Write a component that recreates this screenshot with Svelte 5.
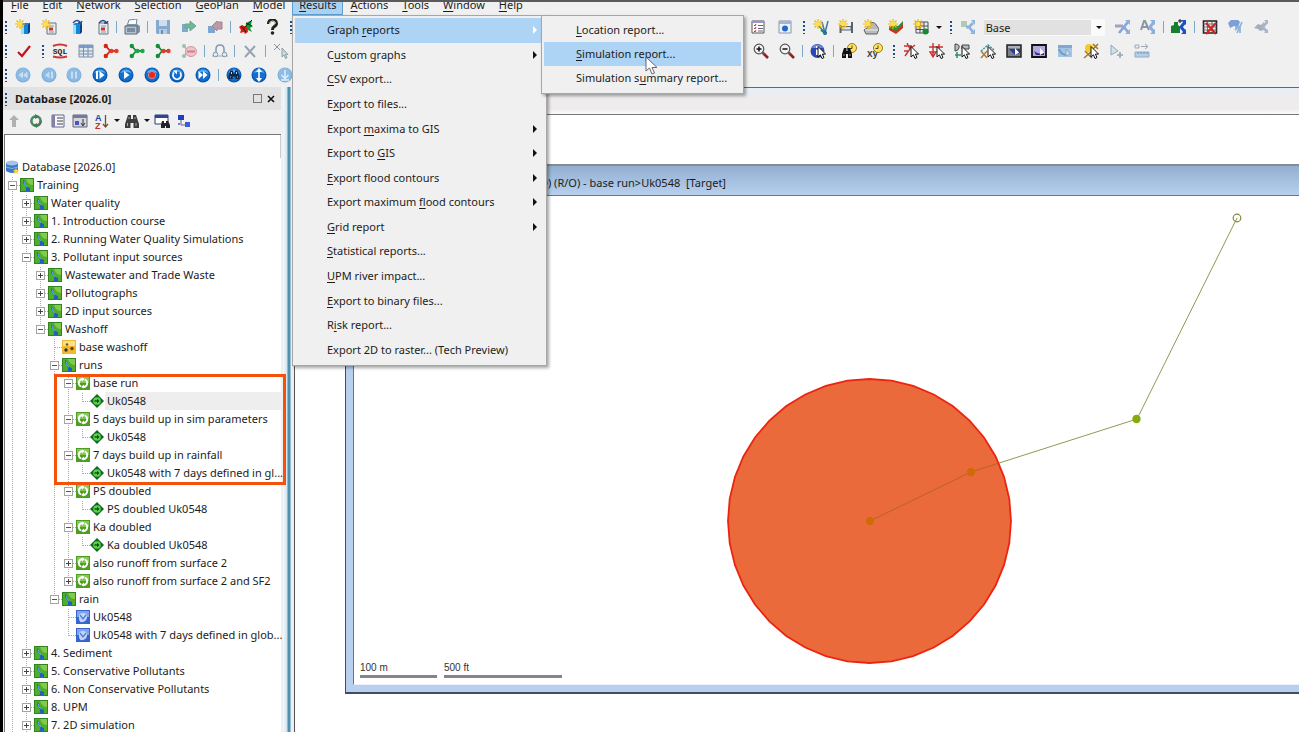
<script>
  const star = '<path d="M5 0v10M0 5h10M1.5 1.5l7 7M8.500 1.500l-7 7" stroke="#f2b705" stroke-width="1.2"/><circle cx="5" cy="5" r="2.300" fill="#ffe04a"/>';
  const pointer = '<path d="M8 3.500v10.500l2.400-2.200 1.600 3.700 2-.9-1.600-3.500h3.200z" fill="#fff" stroke="#111"/>';
  const cube = '<path d="M6 6l2-2h7v9l-2 2H6z" fill="#1786d8"/><path d="M6 6h3v9H6z" fill="#8fe3fb"/><path d="M13 6l2-2v9l-2 2z" fill="#063f8c"/>';
  const page = '<path d="M6 4h9v11H6z" fill="#e9edf0" stroke="#66757e"/><path d="M8 7h5M8 13h5" stroke="#8a979e"/><path d="M8 8.500h4v3H8z" fill="#c33"/>';
  const ball = '<circle cx="8" cy="8" r="7.500" fill="#0a55ad"/><circle cx="8" cy="7.500" r="6.500" fill="#126fce"/><path d="M2.500 6a6 6 0 0 1 11 0q-5.500-2-11 0z" fill="#5ba8ec"/>';
  const paleBall = '<circle cx="8" cy="8" r="7.500" fill="#7fb1de"/><circle cx="8" cy="7.500" r="6.500" fill="#8dbbe4"/>';
  const net = (a, b) => `<path d="M3 3l4 5-4 5M7 8h7" stroke="${a}" stroke-width="1.800" fill="none"/><circle cx="2.800" cy="3" r="2.200" fill="${a}"/><circle cx="2.800" cy="13" r="2.200" fill="${a}"/><circle cx="8.500" cy="8" r="2.200" fill="${b}"/><circle cx="13.500" cy="8" r="2.200" fill="${b}"/>`;
  const binoc = (c) => `<path d="M4 2h3v4h2V2h3l3 9v4H9.500v-5h-3v5H1v-4z" fill="${c}"/><path d="M3.500 10v3M12 10v3M5 4v2M11 4v2" stroke="#aaa"/>`;
  const clock = '<circle cx="11" cy="5" r="4.500" fill="#ffe45c" stroke="#9b7d12"/><path d="M11 2.500V5.500h-2.500" stroke="#444" fill="none"/>';
  const lens = (mark) => `<path d="M10 10l5 5" stroke="#9b1c1c" stroke-width="2.600"/><path d="M9.500 9.500l2 2" stroke="#555" stroke-width="2"/><circle cx="6" cy="6" r="4.800" fill="#f3f3f3" stroke="#555" stroke-width="1.200"/><path d="${mark}" stroke="#111" stroke-width="1.500"/>`;

  const icons = {
    newDb: `${cube}${star}`,
    newPage: `${page}${star}`,
    openDb: `${cube}<path d="M6 4q4-5 8 0l1-2M14 4h-3" stroke="#234a84" stroke-width="1.300" fill="none"/>`,
    openPage: `${page}<path d="M6 4q4-5 8 0l1-2M14 4h-3" stroke="#234a84" stroke-width="1.300" fill="none"/>`,
    print: '<path d="M5 1l8-1-1 7H3z" fill="#fff" stroke="#71849a"/><path d="M1 7l3-2h9l3 2v6l-3 2H1z" fill="#8294a8"/><path d="M1 7h12v8H1z" fill="#b5c2cf" stroke="#5b6b7c"/><path d="M3 10h8M3 12h8" stroke="#46566a"/>',
    save: '<path d="M1 1h14v14H2l-1-1z" fill="#84a9d3"/><path d="M4 1h8v6H4z" fill="#cfdded"/><path d="M4 10h8v5H4z" fill="#b9cbe0"/><path d="M6 11h2v4H6z" fill="#6b8fbd"/>',
    commit: '<path d="M1 5h6v8H1z" fill="#7fa9c9"/><path d="M4 5h5V2l6 5-6 5V9H4z" fill="#6db794" stroke="#6aa59a"/>',
    revert: '<path d="M1 7h7v7H1z" fill="#7ea7cf"/><path d="M15 3v7h-5v2L5 7l5-5v1z" fill="#bc9aa5" stroke="#9b8894"/>',
    validate: '<path d="M8 4l6-3-1 5 2 1-3 2 2 4-4-2-3 1z" fill="#17933b"/><path d="M1 8l3-2 2 1 3 1 1 5-3 2-1-2-4 1 1-3z" fill="#d31f12"/><path d="M5 10l9-9M8 4l6 3M3 7l5 6" stroke="#222"/>',
    help: '<path d="M4.500 5q0-4 4-4t4 3.500q0 2-2.500 3.200Q8.500 8.500 8.500 11" fill="none" stroke="#222" stroke-width="3"/><path d="M5.500 5q0-3 3-3t3 2.500" stroke="#e8e08a" fill="none"/><circle cx="8.500" cy="14" r="1.800" fill="#222"/>',
    check: '<path d="M2 9l4 4 8-10" stroke="#c4161c" stroke-width="2.200" fill="none"/>',
    sql: '<path d="M1 3q7-3 14 0M1 13.500q7 2 14 0" stroke="#cf3535" stroke-width="2" fill="none"/><text x="8" y="11" text-anchor="middle" font-family="Liberation Mono" font-weight="700" font-size="8" fill="#222">SQL</text>',
    table: '<path d="M1 2h14v12H1z" fill="#dfe7f0" stroke="#7c90ac"/><path d="M1 2h14v3H1z" fill="#7a9ccb"/><path d="M1 8h14M1 11h14M5.500 2v12M10 2v12" stroke="#7c90ac"/>',
    netRed: net('#d92216', '#e8392a'),
    netGreen: net('#15923a', '#23a548'),
    netMix: net('#158c38', '#e8392a'),
    netPale: '<path d="M3 3l4 5-4 5" stroke="#a9b9ad" stroke-width="1.500" fill="none"/><circle cx="3" cy="3" r="2" fill="#a4bfa9"/><circle cx="3" cy="13" r="2" fill="#a4bfa9"/><ellipse cx="10" cy="8.500" rx="5.500" ry="5" fill="#efc4cb" stroke="#d295a1"/><path d="M6 8.500h8" stroke="#cf7f8e" stroke-width="2"/>',
    loop: '<path d="M4 11V6q0-4 4-4t4 4v5" stroke="#8298ad" stroke-width="1.500" fill="none"/><path d="M0 13h16" stroke="#9aabbb"/><circle cx="3.500" cy="11.500" r="2.300" fill="#dfe8f0" stroke="#8298ad"/><circle cx="12.500" cy="11.500" r="2.300" fill="#dfe8f0" stroke="#8298ad"/>',
    cross: '<path d="M3 3l10 11M13 3L3 14" stroke="#98a4b1" stroke-width="2"/>',
    deselect: '<path d="M1 1l6 6M7 1L1 7" stroke="#8f8f96"/><path d="M9 5v9l2-2 1.500 3.500 1.500-.7-1.500-3.300H15z" fill="#cfd6d9" stroke="#8ea0a8"/>',
    first: `${paleBall}<path d="M8 4.500v7L3.500 8zM12.500 4.500v7L8 8z" fill="#c5def3"/>`,
    back: `${paleBall}<path d="M8.500 4.500v7L4 8z" fill="#c5def3"/><path d="M11 4.500v7" stroke="#c5def3" stroke-width="2"/>`,
    pause: `${paleBall}<path d="M6 4.500v7M10 4.500v7" stroke="#c5def3" stroke-width="2"/>`,
    step: `${ball}<path d="M5 4v8" stroke="#fff" stroke-width="2"/><path d="M7.500 4v8l5-4z" fill="#fff"/>`,
    play: `${ball}<path d="M6 4v8l5.500-4z" fill="#fff"/>`,
    record: `${ball}<circle cx="8" cy="8" r="3.600" fill="#e8281b" stroke="#d98a94"/>`,
    reload: `${ball}<path d="M5 5.500a4 4 0 1 0 6 0" stroke="#fff" stroke-width="1.800" fill="none"/><path d="M4 3.500h4v4z" fill="#fff"/>`,
    last: `${ball}<path d="M3.500 4v8L8 8zM8 4v8l4.500-4z" fill="#fff"/>`,
    findBall: `${ball}<path d="M4.500 3.500H7v3h2v-3h2.500l2 5.500v3h-4V9.500h-3V12h-4V9z" fill="#0c2747"/><path d="M4 10h1M11 10h1M5.500 5v2M10.500 5v2" stroke="#b5d4ef"/>`,
    upDown: `${ball}<path d="M8 3v10" stroke="#fff" stroke-width="1.600"/><path d="M8 1L5 5h6zM8 15l-3-4h6z" fill="#fff"/>`,
    down: `${paleBall}<path d="M8 3v8M4.500 8L8 11.500 11.500 8M4 13h8" stroke="#e1eefa" stroke-width="1.500" fill="none"/>`,
    report: '<path d="M2 2h12v12H2z" fill="#fff" stroke="#555"/><path d="M2 2h12v2H2z" fill="#9a96cc"/><path d="M4 6l1 1 1-2M4 9l1 1 1-2M4 12l1 1 1-2" stroke="#c22" fill="none"/><path d="M8 6.500h5M8 9.500h5M8 12h5" stroke="#667"/>',
    view: '<path d="M2 2h12v12H2z" fill="#edf3fa" stroke="#8696b0"/><path d="M2 2h12v3H2z" fill="#a2b5d7"/><circle cx="8" cy="9.500" r="3" fill="#2568c8"/>',
    newLink: `<path d="M5 6l7 8 3-12M12 14L9 3" stroke="#3c78a5" stroke-width="1.500" fill="none"/><circle cx="12" cy="14" r="2" fill="#2255b3"/><path d="M8 11l5 4" stroke="#178c5b" stroke-width="2"/>${star}`,
    newPipe: `<path d="M2.500 6v8M14 3v11" stroke="#596269" stroke-width="2"/><path d="M3 7.500h10v3.500H3z" fill="#dfe3e6" stroke="#596269"/>${star}`,
    newPump: `<path d="M6 5q5-4 8 2l2 3-2 5H3l-2-4 3-2z" fill="#b6bab8" stroke="#5d6260"/><path d="M2 11h13" stroke="#eee"/>${star}`,
    newMesh: `<path d="M1 8l7 3 7-8v6l-7 6-7-4z" fill="#da2c17"/><path d="M1 7l5-1 4 1 5-5v3l-7 7-7-3z" fill="#19963c"/>${star}`,
    newGrid: `<path d="M3 3h12v11H3zM7 3v11M11 3v11M3 7h12M3 10.500h12" fill="#eee" stroke="#4a4f55"/><circle cx="12.500" cy="12.500" r="3" fill="#148c2b"/>${star}`,
    scenario: '<path d="M1 2h6v6H1z" fill="#b4c9b5"/><path d="M6 8h3l4-4M9 8l4 5" stroke="#8fb2de" stroke-width="2.800" fill="none"/><path d="M11 1h4v5zM10 15h5v-5z" fill="#8fb2de"/>',
    netA: '<path d="M0 7h8" stroke="#9ea3c0" stroke-width="3"/><path d="M4 14L13 3M8 7l5 6" stroke="#87a5d8" stroke-width="2.600"/><path d="M10 1h5v5zM10 15h5v-5z" fill="#8faee0"/>',
    netB: '<path d="M1 11L4 2h1l4 9M2.500 8h5" stroke="#8797a8" stroke-width="2" fill="none"/><path d="M14 3l-4 5 4 5" stroke="#8faee0" stroke-width="3" fill="none"/><path d="M10 1h5v5zM10 15h5v-5z" fill="#8faee0"/>',
    addScenario: '<path d="M0 7l3-1V3h4v3l2 2v6H0z" fill="#167f2e"/><path d="M14 3l-4 5 4 5" stroke="#1b51c8" stroke-width="3" fill="none"/><path d="M10 1h5v5zM10 15h5v-5z" fill="#1b51c8"/><path d="M7 2h4M9 0v4" stroke="#111"/>',
    removeTable: '<path d="M1.500 2h13v12h-13z" fill="#eee" stroke="#222" stroke-width="1.600"/><path d="M1 5h14M1 8h14M1 11h14M5.500 2v12M10 2v12" stroke="#555" stroke-width=".8"/><path d="M4 4l10 11M14 4L4 15" stroke="#d32020" stroke-width="2"/>',
    flagBlue: '<path d="M1 4l3-3h7l2 2-2 5-4-1-4 2z" fill="#7d9fd8"/><path d="M8 11l4-4M10 14l5-11M8 8h5v6" stroke="#8fb5dd" stroke-width="1.800"/>',
    flagGray: '<path d="M1 9l4-4 3 1 3-3v8l-4 1-2-2z" fill="#a7adba"/><path d="M14 3l-4 5 4 5" stroke="#a9b4cc" stroke-width="2.800" fill="none"/><path d="M11 1h4v4zM11 14h4v-4z" fill="#a9b4cc"/>',
    zoomIn: lens('M3.500 6h5M6 3.500v5'),
    zoomOut: lens('M3.500 6h5'),
    info: `<circle cx="7.500" cy="8" r="7" fill="#2b49b5"/><path d="M2 5a6 6 0 0 1 11 0z" fill="#6f8be0"/><path d="M6 3h2v2H6zM6 6.500h2V12H6z" fill="#fff"/>${pointer}`,
    findTime: `${clock}<path d="M3 5h2.500v3h1V5H9l2 6v4H7v-4H5v4H1v-4z" fill="#111"/><path d="M3 11v2M9 11v2" stroke="#999"/>`,
    xyTime: `<text x="0" y="14" font-family="Liberation Sans" font-size="10" font-weight="700" fill="#444">xy</text>${clock}`,
    selA: `<path d="M1 3h8M9 3L2 13M4 0l3 6 5-4M1 8h5" stroke="#cb3030" stroke-width="1.400" fill="none"/>${pointer}`,
    selB: `<path d="M0 4h14M4 0v13M10 1v8M1 9h6l-3 5z" stroke="#cb3030" stroke-width="1.400" fill="none"/>${pointer}`,
    selC: `<path d="M1 1v7M1 1q5 0 4 4-1 3-4 3M8 2h7v4H8z" stroke="#444" fill="#b6bebb"/><path d="M1 12h6M3 9v6" stroke="#2b8d77" stroke-width="1.500"/>${pointer}`,
    selD: `<path d="M1 8l7-6 6 5" stroke="#37918c" stroke-width="1.500" stroke-dasharray="2 1" fill="none"/><path d="M1 8l6 7M7 8l-6 7" stroke="#b7793a" stroke-width="1.500"/>${pointer}`,
    boxGray: `<path d="M1 2h14v12H1z" fill="#7b8089" stroke="#222" stroke-width="1.500"/><path d="M3 6h11v4l-5 2z" fill="#2b37a0"/><path d="M2 3h12v2H2z" fill="#a9aebb"/><path d="M9 5v7l4-2.500z" fill="#fff"/>`,
    boxPurple: `<path d="M1 2h14v12H1z" fill="#b3a9dc" stroke="#111" stroke-width="1.800"/><path d="M3 8q5 4 10 2v2H5z" fill="#322f9c"/><path d="M9 5v7l4-2.500z" fill="#fff"/>`,
    boxPale: '<path d="M1 2h14v12H1z" fill="#a3c4e2"/><path d="M1 2h14v3H1z" fill="#7fa9d3"/><path d="M2 6q2 6 8 6" stroke="#6c9ac9" stroke-width="2" fill="none"/><path d="M9 6v7l4-2z" fill="#d8e4ee" stroke="#89a7c2"/>',
    starCut: `<path d="M2 8l7 7M9 8l-8 7M10 1l5 5M15 1L9 7" stroke="#a6762b" stroke-width="1.600"/><circle cx="6" cy="5" r="4" fill="#f5cb1c"/>${pointer}`,
    addPoint: '<path d="M3 2v10l7-4z" fill="#cfe0e6" stroke="#90a9b6"/><path d="M9 12h6M12 9v6" stroke="#98a7b2" stroke-width="1.600"/>',
    ruler: '<path d="M1 9h14v5H1z" fill="#b5cfe6" stroke="#90adca"/><path d="M4 9v2M7 9v2M10 9v2M13 9v2" stroke="#7390b0"/><path d="M1 2h4v3H1zM7 3.500h6M11 1l3 2.500L11 6" stroke="#9aa8b6" fill="none"/>',
    up: '<path d="M8 2l5 5h-3v7H6V7H3z" fill="#b0b0ae"/>',
    refresh: '<circle cx="8" cy="8" r="4.600" stroke="#4a8a5e" stroke-width="2.600" fill="none"/><path d="M12.600 8A4.600 4.600 0 0 1 8 12.600" stroke="#5f6f63" stroke-width="2.600" fill="none"/><path d="M7 1l4 2.500L7 6zM9 15l-4-2.500L9 10z" fill="#3c7f53"/>',
    listing: '<path d="M2 2h12v12H2z" fill="#f5f5fb" stroke="#66668c"/><path d="M2 2h3v12H2z" fill="#8181a8"/><path d="M7 5h6M7 8h6M7 11h6" stroke="#444"/>',
    details: '<path d="M1 2h14v12H1z" fill="#d6d6e2" stroke="#62627e"/><path d="M1 2h14v3H1z" fill="#777a95"/><path d="M3 8h4v4H3z" fill="#4b55b8"/><path d="M11 6v6M9 10l2 3 2-3" stroke="#333" fill="none"/>',
    sort: '<text x="1" y="8" font-family="Liberation Sans" font-weight="700" font-size="9" fill="#1d3fa5">A</text><text x="1" y="16" font-family="Liberation Sans" font-weight="700" font-size="9" fill="#cc2a2a">Z</text><path d="M11.500 2v11M9 11l2.500 3 2.500-3" stroke="#7b4c2a" stroke-width="1.300" fill="none"/>',
    binoculars: binoc('#3d3d3d'),
    findWindow: '<path d="M1 2h13v9H1z" fill="#fff" stroke="#283a7a"/><path d="M1 2h13v3H1z" fill="#2d468f"/><path d="M8 8h2v2h2V8h2l2 4v3h-4v-2h-1v2H7v-3z" fill="#222"/>',
    hierarchy: '<path d="M5 6v6h5" stroke="#667" fill="none"/><path d="M2 2h6v5H2z" fill="#1b3fc9"/><path d="M9 9h5v5H9z" fill="#3b5be0"/><path d="M2 10h2v2H2z" fill="#6b83dd"/>'
  };

  const nodeIcons = {
    group: '<path d="M0 0h14v14H0z" fill="#2f8420"/><path d="M1 1h12v12H1z" fill="#4fae2a"/><path d="M6 1h7v6q-5 0-7-6z" fill="#83c94a"/><path d="M3 2q3 1.500 2.500 4T10 10v3H5.500Q7 10 5 8 2.500 5.500 3 2z" fill="#1d5fc4"/><path d="M4 3.500q1.500 1.500.8 3.500l2 2" stroke="#6fb4e8" fill="none"/>',
    run: '<path d="M0 0h14v14H0z" fill="#4c9e1f"/><path d="M1 1h12v6H1z" fill="#86c853"/><path d="M6 3a4 4 0 0 0-1 7.500M8 11a4 4 0 0 0 1-7.500" stroke="#fff" stroke-width="1.800" fill="none"/><path d="M6 1.500v4L9 3zM8 8.500v4L5 11z" fill="#fff"/>',
    sim: '<path d="M7 0l7 7-7 7-7-7z" fill="#0d6b1f"/><circle cx="7" cy="7" r="3.800" fill="#5fd04e"/><path d="M4.500 7H8" stroke="#0b4d18" stroke-width="1.400"/><path d="M7 4.800L9.500 7 7 9.200z" fill="#0b4d18"/>',
    washoff: '<path d="M0 0h14v14H0z" fill="#f0b92e"/><path d="M1 1h12v5H1z" fill="#fbe08a"/><circle cx="5" cy="4.500" r="1.300" fill="#7a5a12"/><circle cx="4" cy="10" r="1.700" fill="#333"/><circle cx="10" cy="8.500" r="1.700" fill="#6b3f10"/>',
    rain: '<path d="M0 0h14v14H0z" fill="#3565cf"/><path d="M1 1h12v6H1z" fill="#7fa3ee"/><path d="M3 6q0-3 4-3t4 4-4 5-4-4z" fill="#c4d6f8"/><path d="M4 5l3 4 3-4" stroke="#4f7bdb" stroke-width="1.300" fill="none"/>',
    db: '<path d="M1 3v8q6 4 12 0V3z" fill="#3d76c4"/><ellipse cx="7" cy="3" rx="6" ry="2.500" fill="#a3c4ec"/><path d="M1 7q6 3 12 0" stroke="#86aee4" fill="none"/><path d="M11 8l1 2 2 .3-1.500 1.400.5 2.300-2-1-2 1 .5-2.300L8 10.300l2-.3z" fill="#ffd43a"/>'
  };

  const topMenus = ['&File', '&Edit', '&Network', '&Selection', '&GeoPlan', '&Model', '&Results', '&Actions', '&Tools', '&Window', '&Help'];

  const bars = [
    [
      { w: 282, items: ['grip', 'newDb', 'newPage', 'openDb', 'openPage', '|', 'print', '|', 'save', 'commit', 'revert', '|', 'validate', 'help'] },
      { w: 510, items: ['grip', 'space', 'report', 'view'] },
      { w: 144, items: ['grip', 'newLink', 'newPipe', 'newPump', 'newMesh', 'newGrid', 'drop'] },
      { w: 326, items: ['grip', 'scenario', 'select', 'netA', 'netB', '|', 'addScenario', '|', 'removeTable', 'flagBlue', 'flagGray'] }
    ],
    [
      { w: 34, items: ['grip', 'check'] },
      { w: 254, items: ['grip', 'sql', 'table', 'netRed', 'netGreen', 'netMix', 'netPale', '|', 'loop', '|', 'cross', '|', 'deselect'] },
      { w: 448, items: ['space'] },
      { w: 140, items: ['zoomIn', 'zoomOut', '|', 'info', '|', 'findTime', 'xyTime'] },
      { w: 264, items: ['grip', 'selA', 'selB', 'selC', 'selD', 'boxGray', 'boxPurple', 'boxPale', 'starCut', 'addPoint', 'ruler'] }
    ],
    [
      { w: 295, items: ['grip', 'first', 'back', 'pause', 'step', 'play', 'record', 'reload', 'last', '|', 'findBall', 'upDown', 'down'] }
    ]
  ];

  const resultItems = [
    ['Graph &reports', true], ['C&ustom graphs', true], ['&CSV export...', false], ['E&xport to files...', false],
    ['Export &maxima to GIS', true], ['Export to &GIS', true], ['&Export flood contours', true],
    ['Export maximum &flood contours', true], ['&Grid report', true], ['&Statistical reports...', false],
    ['&UPM river impact...', false], ['&Export to binary files...', false], ['R&isk report...', false],
    ['Export 2D to raster... (Tech Preview)', false]
  ];
  const graphItems = ['&Location report...', '&Simulation report...', 'Simulation s&ummary report...'];

  // [level, expander, icon, label, last among its siblings]
  const tree = [
    [0, '-', 'group', 'Training'],
    [1, '+', 'group', 'Water quality'],
    [1, '+', 'group', '1. Introduction course'],
    [1, '+', 'group', '2. Running Water Quality Simulations'],
    [1, '-', 'group', '3. Pollutant input sources'],
    [2, '+', 'group', 'Wastewater and Trade Waste'],
    [2, '+', 'group', 'Pollutographs'],
    [2, '+', 'group', '2D input sources'],
    [2, '-', 'group', 'Washoff', true],
    [3, '', 'washoff', 'base washoff'],
    [3, '-', 'group', 'runs'],
    [4, '-', 'run', 'base run'],
    [5, '', 'sim', 'Uk0548', true],
    [4, '-', 'run', '5 days build up in sim parameters'],
    [5, '', 'sim', 'Uk0548', true],
    [4, '-', 'run', '7 days build up in rainfall'],
    [5, '', 'sim', 'Uk0548 with 7 days defined in gl...', true],
    [4, '-', 'run', 'PS doubled'],
    [5, '', 'sim', 'PS doubled Uk0548', true],
    [4, '-', 'run', 'Ka doubled'],
    [5, '', 'sim', 'Ka doubled Uk0548', true],
    [4, '+', 'run', 'also runoff from surface 2'],
    [4, '+', 'run', 'also runoff from surface 2 and SF2', true],
    [3, '-', 'group', 'rain', true],
    [4, '', 'rain', 'Uk0548'],
    [4, '', 'rain', 'Uk0548 with 7 days defined in glob...', true],
    [1, '+', 'group', '4. Sediment'],
    [1, '+', 'group', '5. Conservative Pollutants'],
    [1, '+', 'group', '6. Non Conservative Pollutants'],
    [1, '+', 'group', '8. UPM'],
    [1, '+', 'group', '7. 2D simulation']
  ];
  const open = [];
  const rows = tree.map(([level, mark, icon, label, last]) => {
    open[level] = !last;
    return { mark, icon, label, last, guides: open.slice(0, level) };
  });

  const ring = Array.from({ length: 40 }, (_, i) => {
    const a = (i * Math.PI) / 20;
    return `${(515.5 + 141.5 * Math.cos(a)).toFixed(1)},${(325 + 142 * Math.sin(a)).toFixed(1)}`;
  }).join(' ');
</script>

{#snippet mnemonic(text)}
  {@const at = text.indexOf('&')}
  {#if at < 0}<span>{text}</span>{:else}<span>{text.slice(0, at)}<u>{text[at + 1]}</u>{text.slice(at + 2)}</span>{/if}
{/snippet}

{#snippet tool(name)}
  <button class="tool" aria-label={name}><svg viewBox="0 0 16 16" width="16" height="16" fill="none">{@html icons[name]}</svg></button>
{/snippet}

<div class="app">
  <header>
    <nav class="menubar">
      {#each topMenus as m}
        <button class:active={m === '&Results'}>{@render mnemonic(m)}</button>
      {/each}
    </nav>
    {#each bars as bar}
      <div class="bar">
        {#each bar as group}
          <div class="group" style="width: {group.w}px">
            {#each group.items as it}
              {#if it === 'grip'}<i class="grip"></i>
              {:else if it === '|'}<i class="sep"></i>
              {:else if it === 'space'}<i class="space"></i>
              {:else if it === 'drop'}<button class="drop" aria-label="More grids"></button>
              {:else if it === 'select'}
                <label class="combo"><select aria-label="Scenario"><option>Base</option></select></label>
              {:else}{@render tool(it)}{/if}
            {/each}
          </div>
        {/each}
      </div>
    {/each}

    <div class="menu results">
      {#each resultItems as [text, sub], i}
        <button class:hot={i === 0}>{@render mnemonic(text)}{#if sub}<i class="arrow"></i>{/if}</button>
      {/each}
    </div>
    <div class="menu graphs">
      {#each graphItems as text, i}
        <button class:hot={i === 1}>{@render mnemonic(text)}</button>
      {/each}
      <svg class="cursor" viewBox="0 0 13 19" width="13" height="19"><path d="M1 1v14l3.500-3 2.500 6 2.500-1-2.500-5.500H12z" fill="#fff" stroke="#667" /></svg>
    </div>
  </header>

  <main>
    <aside>
      <div class="dock-title">
        <i class="grip"></i>
        <h1>Database [2026.0]</h1>
        <button class="float" aria-label="Float"></button>
        <button class="close" aria-label="Close"><svg viewBox="0 0 8 8" width="8" height="8"><path d="M1 1l6 6M7 1L1 7" stroke="#111" stroke-width="1.600" /></svg></button>
      </div>
      <div class="dock-tools">
        {@render tool('up')}{@render tool('refresh')}{@render tool('listing')}{@render tool('details')}{@render tool('sort')}
        <button class="drop" aria-label="Sort options"></button>
        {@render tool('binoculars')}
        <button class="drop" aria-label="Find options"></button>
        {@render tool('findWindow')}{@render tool('hierarchy')}
      </div>
      <div class="tree">
        <input class="filter" aria-label="Filter" />
        <div class="row root"><svg viewBox="0 0 14 14" width="14" height="14">{@html nodeIcons.db}</svg><span>Database [2026.0]</span></div>
        {#each rows as r, i}
          <div class="row">
            {#each r.guides as g}<i class="cell" class:line={g}></i>{/each}
            <i class="cell line tick" class:end={r.last}>
              {#if r.mark}<button class="expander" class:plus={r.mark === '+'} aria-label="Toggle"></button>{/if}
            </i>
            <svg viewBox="0 0 14 14" width="14" height="14">{@html nodeIcons[r.icon]}</svg>
            <span class:picked={i === 12}>{r.label}</span>
          </div>
        {/each}
        <div class="callout"></div>
      </div>
    </aside>
    <div class="splitter"></div>
    <section class="desk">
      <div class="tabs"></div>
      <div class="window">
        <h2>GeoPlan - (D) (R/O) - base run&gt;Uk0548&nbsp; [Target]</h2>
        <div class="canvas">
          <svg class="map" viewBox="0 0 945 489" preserveAspectRatio="xMinYMin slice">
            <path d="M883 22L783 223 617 276 516 325" fill="none" stroke="#8f9a52" />
            <circle cx="883" cy="22" r="3.800" fill="none" stroke="#85853a" stroke-width="1.200" />
            <circle cx="782.500" cy="223" r="4.200" fill="#86ab0c" />
            <polygon points={ring} fill="#ea6a3c" stroke="#ec2410" stroke-width="1.800" />
            <path d="M644 267.400L617 276 516 325" fill="none" stroke="#b8622a" />
            <circle cx="617" cy="276" r="4.200" fill="#cf6a08" />
            <circle cx="516" cy="325" r="4.200" fill="#cf6a08" />
          </svg>
          <div class="scales"><span class="metres">100 m</span><span class="feet">500 ft</span></div>
        </div>
      </div>
    </section>
  </main>
</div>

<style>
  :global(body) { margin: 0; background: #000; }
  .app { height: 100vh; margin-left: 3px; display: flex; flex-direction: column; overflow: hidden; background: #f0f0f0; font: 11px/16px "Noto Sans", "Open Sans", sans-serif; color: #1c1c1c; position: relative; }
  .app::before { content: ""; flex: none; height: 2px; background: #5a5a5a; margin-left: -3px; }
  button { font: inherit; color: inherit; border: 0; padding: 0; background: none; box-sizing: border-box; }
  header { flex: none; position: relative; z-index: 2; }
  u { text-decoration: underline; text-underline-offset: 2px; }
  .menubar { height: 13px; padding-left: 1px; display: flex; align-items: flex-end; overflow: hidden; }
  .menubar button { flex: none; height: 20px; padding: 0 7px; line-height: 18px; }
  .menubar button.active { background: #a9d1f4; border: 1px solid #5f9fce; padding: 0 6px; }
  .bar { height: 24px; display: flex; gap: 3px; }
  .group { flex: none; display: flex; align-items: center; }
  .tool { flex: 1 1 26px; min-width: 0; height: 24px; display: flex; align-items: center; justify-content: center; }
  .tool svg { flex: none; }
  .grip { flex: none; width: 7px; height: 14px; background: radial-gradient(circle at 3px 2px, #1b4f86 1px, transparent 1px) 0 0 / 7px 4px; }
  .sep { flex: none; width: 5px; height: 12px; background: linear-gradient(90deg, transparent 2px, #79a9c4 2px, #79a9c4 3px, transparent 3px); }
  .space { flex: 1000 1 0; }
  .drop { flex: none; width: 12px; height: 20px; display: flex; align-items: center; justify-content: center; }
  .drop::before, .combo::after { content: ""; border: 3px solid transparent; border-top-color: #111; border-bottom: 0; }
  .combo { flex: none; width: 121px; height: 17px; margin: 0 5px 0 3px; display: flex; align-items: center; background: #fafafa; }
  .combo select { flex: 1; height: 15px; margin: 0 5px 0 0; padding: 0 2px; border: 0; appearance: none; background: #e1e1e1; font: inherit; line-height: 15px; color: inherit; }
  .combo::after { margin-right: 3px; }

  .menu { position: absolute; box-sizing: border-box; display: flex; flex-direction: column; background: #f0f0f0; border: 1px solid #a6a6a6; box-shadow: 2px 2px 3px rgba(0, 0, 0, 0.35); }
  .menu button { flex: 1; display: flex; align-items: center; justify-content: space-between; text-align: left; white-space: nowrap; }
  .menu .hot { background: #add3f5; }
  .results { left: 289px; top: 13px; width: 255px; height: 351px; padding: 2px 4px 3px 2px; }
  .results button { padding: 0 4px 0 32px; }
  .graphs { left: 538px; top: 13px; width: 203px; height: 79px; padding: 2px 2px 3px; }
  .graphs button { padding-left: 32px; }
  .arrow { border: 4px solid transparent; border-left-color: #111; border-right: 0; margin-right: 1px; }
  .hot .arrow { border-left-color: #fff; }
  .cursor { position: absolute; left: 103px; top: 40px; }

  main { flex: 1; min-height: 0; display: flex; }
  aside { flex: none; width: 280px; display: flex; flex-direction: column; }
  .dock-title { height: 23px; margin-right: 2px; display: flex; align-items: center; background: #e2e2e2; }
  .dock-title h1 { flex: 1; margin: 0 0 0 5px; font-size: 11px; line-height: 22px; font-weight: 700; }
  .float { width: 9px; height: 9px; border: 1px solid #777; margin-right: 5px; }
  .close { display: flex; align-items: center; width: 8px; height: 16px; margin-right: 6px; }
  .dock-tools { height: 24px; box-sizing: border-box; padding-bottom: 3px; display: flex; align-items: center; }
  .dock-tools .tool { flex: 0 0 22px; height: 21px; }
  .dock-tools .drop { width: 8px; }
  .tree { flex: 1; position: relative; min-height: 0; margin: 0 2px 0 1px; background: #fff; border-top: 1px solid #777; border-left: 1px solid #777; }
  .filter { display: block; box-sizing: border-box; width: 100%; height: 23px; border: 0; border-right: 1px solid #ccc; background: #fff; }
  .row { height: 18px; display: flex; align-items: center; white-space: nowrap; }
  .row svg { flex: none; margin-right: 1px; }
  .row span { line-height: 18px; padding-left: 2px; }
  .row .picked { flex: 1; background: #eee; }
  .cell { flex: none; width: 14px; height: 18px; display: flex; align-items: center; justify-content: center; }
  .tick { width: 15px; }
  .cell.line { background: linear-gradient(#fff 1px, transparent 1px) 0 0 / 2px 2px, linear-gradient(90deg, transparent 7px, #aaa 7px, #aaa 8px, transparent 8px); }
  .cell.tick::after { content: ""; width: 7px; margin-left: auto; border-top: 1px dotted #aaa; }
  .cell.end { background-size: 2px 2px, 14px 10px; background-repeat: repeat, no-repeat; }
  .expander { flex: none; width: 9px; height: 9px; margin: 0 0 0 3px; border: 1px solid #a4a4a4; background: linear-gradient(#555, #555) center / 5px 1px no-repeat #fff; }
  .expander.plus { background: linear-gradient(#444, #444) center / 5px 1px no-repeat, linear-gradient(#444, #444) center / 1px 5px no-repeat #fff; }
  .cell.tick:has(.expander)::after { width: 3px; margin-left: 0; }
  .callout { position: absolute; left: 49px; top: 239px; width: 226px; height: 105px; border: 3px solid #f4510b; z-index: 1; }

  .splitter { flex: none; width: 12px; background: linear-gradient(90deg, #f4f9fc, #cfe4f1 4px, #4d8fb5 5px, #4d8fb5 7px, #f0f0f0 8px, #ededed 11px, #555 11px); }
  .desk { flex: 1; min-width: 0; display: flex; flex-direction: column; background: #fff; }
  .tabs { flex: none; height: 28px; box-sizing: border-box; background: linear-gradient(#e6eff8, #eeecec 40%, #eeecec 80%, #fafafa); border-top: 1px solid #4d7184; border-bottom: 1px solid #777; }
  .window { flex: 1; min-height: 0; margin: 49px 0 38px 50px; display: flex; flex-direction: column; background: #b8d0ee; border: solid #3d4f5c; border-width: 2px 0 2px 1px; border-top-color: #858b90; padding: 0 0 7px 7px; }
  .window h2 { flex: none; margin: 0 0 0 -7px; height: 29px; box-sizing: border-box; padding: 3px 0 0 138px; font-size: 11px; line-height: 28px; font-weight: 400; background: linear-gradient(#92aed0, #b8d0ee); white-space: pre; }
  .canvas { flex: 1; position: relative; min-height: 0; overflow: hidden; background: #fff; border: 1px solid #6a7680; border-right: 0; border-bottom-color: #eef; }
  .map { display: block; width: 100%; height: 100%; }
  .scales { position: absolute; left: 6px; bottom: 6px; display: flex; gap: 7px; font: 10px/14px "Liberation Sans", Arial, sans-serif; color: #333; }
  .scales span { border-bottom: 3px solid #858585; }
  .metres { width: 77px; }
  .feet { width: 118px; }
</style>
